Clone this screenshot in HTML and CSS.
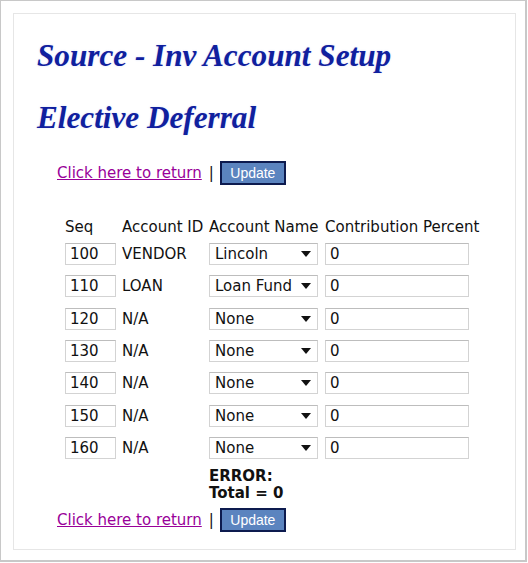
FILE: index.html
```html
<!DOCTYPE html>
<html lang="en">
  <head>
    <meta charset="UTF-8" />
    <title>Source - Inv Account Setup</title>
    <link rel="stylesheet" href="styles.css">
  </head>
  <body>
    <div class="frame">
      <div class="panel">
        <h1>Source - Inv Account Setup</h1>
        <h1>Elective Deferral</h1>

        <div class="actions">
          <a href="#" class="back">Click here to return</a>
          <span class="sep">|</span>
          <button type="button" class="update">Update</button>
        </div>

        <table class="accounts">
          <thead>
            <tr>
              <th class="c-seq">Seq</th>
              <th class="c-id">Account ID</th>
              <th class="c-name">Account Name</th>
              <th class="c-pct">Contribution Percent</th>
            </tr>
          </thead>
          <tbody>
            <tr>
              <td><input type="text" class="seq" value="100" /></td>
              <td>VENDOR</td>
              <td><div class="pick"><span>Lincoln</span><i class="arrow"></i></div></td>
              <td><input type="text" class="pct" value="0" /></td>
            </tr>
            <tr>
              <td><input type="text" class="seq" value="110" /></td>
              <td>LOAN</td>
              <td><div class="pick"><span>Loan Fund</span><i class="arrow"></i></div></td>
              <td><input type="text" class="pct" value="0" /></td>
            </tr>
            <tr>
              <td><input type="text" class="seq" value="120" /></td>
              <td>N/A</td>
              <td><div class="pick"><span>None</span><i class="arrow"></i></div></td>
              <td><input type="text" class="pct" value="0" /></td>
            </tr>
            <tr>
              <td><input type="text" class="seq" value="130" /></td>
              <td>N/A</td>
              <td><div class="pick"><span>None</span><i class="arrow"></i></div></td>
              <td><input type="text" class="pct" value="0" /></td>
            </tr>
            <tr>
              <td><input type="text" class="seq" value="140" /></td>
              <td>N/A</td>
              <td><div class="pick"><span>None</span><i class="arrow"></i></div></td>
              <td><input type="text" class="pct" value="0" /></td>
            </tr>
            <tr>
              <td><input type="text" class="seq" value="150" /></td>
              <td>N/A</td>
              <td><div class="pick"><span>None</span><i class="arrow"></i></div></td>
              <td><input type="text" class="pct" value="0" /></td>
            </tr>
            <tr>
              <td><input type="text" class="seq" value="160" /></td>
              <td>N/A</td>
              <td><div class="pick"><span>None</span><i class="arrow"></i></div></td>
              <td><input type="text" class="pct" value="0" /></td>
            </tr>
            <tr class="error-row">
              <td></td>
              <td></td>
              <td class="error">ERROR:<br />Total = 0</td>
              <td></td>
            </tr>
          </tbody>
        </table>

        <div class="actions bottom">
          <a href="#" class="back">Click here to return</a>
          <span class="sep">|</span>
          <button type="button" class="update">Update</button>
        </div>
      </div>
    </div>
  </body>
</html>
```

FILE: styles.css
```css
body {
  margin: 0;
  background-color: #ffffff;
  font-family: "DejaVu Sans", Verdana, sans-serif;
  font-size: 15px;
  color: #111111;
}

.frame {
  width: 524px;
  height: 559px;
  border: 1px solid #c8c8c8;
  border-right-width: 2px;
  border-bottom-width: 2px;
}

.panel {
  margin: 12px 0 0 12px;
  width: 478px;
  height: 535px;
  border: 1px solid #e6e6e6;
  padding: 0 0 0 23px;
}

h1 {
  font-family: "Liberation Serif", "Times New Roman", serif;
  font-style: italic;
  font-weight: bold;
  font-size: 31.2px;
  line-height: 36px;
  color: #10209e;
  text-shadow: 0 0 2px rgba(110, 140, 230, 0.3);
  margin: 24px 0 0 0;
}

h1 + h1 {
  margin-top: 26px;
}

.actions {
  display: flex;
  align-items: center;
  margin: 25px 0 0 20px;
}

.actions.bottom {
  margin-top: 6px;
}

.back {
  color: #990099;
  text-decoration: underline;
}

.sep {
  margin: 0 6px 0 7px;
}

.update {
  font-family: "Liberation Sans", Arial, sans-serif;
  font-size: 14px;
  color: #ffffff;
  background-color: #5b84bf;
  border: 2px solid #0d1b4f;
  padding: 0;
  height: 24px;
  width: 66px;
  line-height: 18px;
}

.accounts {
  border-collapse: collapse;
  margin: 31px 0 0 28px;
}

.accounts th {
  font-weight: normal;
  text-align: left;
  padding: 0;
  height: 22px;
  line-height: 22px;
  white-space: nowrap;
}

.accounts tbody tr {
  height: 32.33px;
}

.accounts td {
  padding: 0;
  vertical-align: middle;
}

.c-seq {
  width: 57px;
}

.c-id {
  width: 87px;
}

.c-name {
  width: 116px;
}

input {
  box-sizing: border-box;
  height: 22px;
  border: 1px solid #d3d3d3;
  border-top-color: #bdbdbd;
  font-family: "DejaVu Sans", Verdana, sans-serif;
  font-size: 15px;
  color: #111111;
  padding: 0 4px;
  margin: 0;
}

.seq {
  width: 51px;
}

.pct {
  width: 144px;
}

.pick {
  box-sizing: border-box;
  width: 109px;
  height: 22px;
  border: 1px solid #d3d3d3;
  border-top-color: #bdbdbd;
  display: flex;
  align-items: center;
  justify-content: space-between;
  padding: 0 6px 0 5px;
}

.arrow {
  width: 0;
  height: 0;
  border-left: 5px solid transparent;
  border-right: 5px solid transparent;
  border-top: 6px solid #111111;
}

.accounts tbody tr.error-row {
  height: auto;
}

.accounts td.error {
  font-weight: bold;
  font-size: 15px;
  line-height: 17px;
  padding: 4px 0 0 0;
}
```
